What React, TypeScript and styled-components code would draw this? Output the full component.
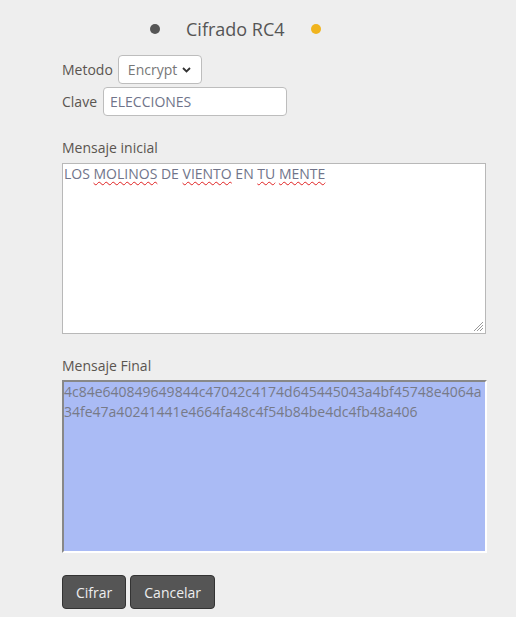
import React from "react";
import styled, { createGlobalStyle } from "styled-components";

const Global = createGlobalStyle`
  html, body { margin: 0; padding: 0; background: #eeeeee; }
  body { font-family: "Open Sans", "Liberation Sans", sans-serif; }
`;

const Page = styled.div`
  width: 516px;
  height: 617px;
  box-sizing: border-box;
  padding: 14px 0 0 62px;
  color: #555;
  font-size: 14px;
`;

const TitleRow = styled.div`
  display: flex;
  align-items: center;
  gap: 26px;
  margin-left: 88px;
  height: 30px;
`;

const Dot = styled.span<{ $color: string }>`
  width: 10px;
  height: 10px;
  border-radius: 50%;
  background: ${(p) => p.$color};
`;

const Title = styled.h1`
  margin: 0;
  font-size: 18px;
  font-weight: 400;
  color: #555;
`;

const FieldRow = styled.div<{ $top: number }>`
  display: flex;
  align-items: center;
  gap: 5px;
  margin-top: ${(p) => p.$top}px;
`;

const Label = styled.label`
  color: #5a5550;
  font-size: 14px;
`;

const SelectBox = styled.div`
  position: relative;
  width: 84px;
  height: 29px;
  box-sizing: border-box;
  border: 1px solid #bdbdbd;
  border-radius: 4px;
  background: #fff;
  display: flex;
  align-items: center;
  padding-left: 9px;
  color: #777;
  font-size: 14px;
`;

const Chevron = styled.svg`
  position: absolute;
  right: 10px;
  top: 11px;
`;

const Input = styled.input`
  width: 184px;
  height: 29px;
  box-sizing: border-box;
  margin-left: 1px;
  border: 1px solid #bdbdbd;
  border-radius: 4px;
  background: #fff;
  padding: 0 6px;
  font-family: inherit;
  font-size: 14px;
  color: #70748a;
  outline: none;
`;

const SectionLabel = styled.div<{ $top: number }>`
  margin-top: ${(p) => p.$top}px;
  height: 22px;
  line-height: 22px;
  color: #5a5550;
`;

const Area = styled.div`
  position: relative;
  margin-top: 4px;
  width: 424px;
  height: 171px;
  box-sizing: border-box;
  border: 1px solid #b8b8b8;
  background: #fff;
  padding: 0 1px;
  font-size: 14px;
  line-height: 20px;
  color: #70748a;
`;

const Squiggle = styled.span`
  text-decoration: underline wavy #e02020;
  text-decoration-thickness: 1px;
  text-underline-offset: 2px;
`;

const Grip = styled.svg`
  position: absolute;
  right: 1px;
  bottom: 1px;
`;

const OutArea = styled.div`
  margin-top: 3px;
  width: 425px;
  height: 173px;
  box-sizing: border-box;
  border-style: solid;
  border-width: 2px;
  border-color: #888 #fff #fff #888;
  background: #aabbf5;
  font-size: 14px;
  line-height: 20px;
  color: #777a88;
  word-break: break-all;
`;

const Buttons = styled.div`
  display: flex;
  gap: 4px;
  margin-top: 22px;
`;

const Button = styled.button`
  height: 34px;
  padding: 0 13px;
  border: 1px solid #333;
  border-radius: 4px;
  background: #555;
  color: #eee;
  font-family: inherit;
  font-size: 14px;
`;

export default function App() {
  return (
    <>
      <Global />
      <Page>
        <TitleRow>
          <Dot $color="#555" />
          <Title>Cifrado RC4</Title>
          <Dot $color="#f0b41e" />
        </TitleRow>
        <FieldRow $top={11}>
          <Label>Metodo</Label>
          <SelectBox>
            Encrypt
            <Chevron width="9" height="6" viewBox="0 0 9 6">
              <path d="M1 1l3.5 3.5L8 1" fill="none" stroke="#333" strokeWidth="1.8" />
            </Chevron>
          </SelectBox>
        </FieldRow>
        <FieldRow $top={3}>
          <Label>Clave</Label>
          <Input defaultValue="ELECCIONES" />
        </FieldRow>
        <SectionLabel $top={21}>Mensaje inicial</SectionLabel>
        <Area>
          LOS <Squiggle>MOLINOS</Squiggle> DE <Squiggle>VIENTO</Squiggle> EN{" "}
          <Squiggle>TU</Squiggle> <Squiggle>MENTE</Squiggle>
          <Grip width="12" height="12" viewBox="0 0 12 12">
            <path d="M11 2L2 11M11 5L5 11M11 8L8 11" stroke="#999" strokeWidth="1" />
          </Grip>
        </Area>
        <SectionLabel $top={21}>Mensaje Final</SectionLabel>
        <OutArea>
          4c84e640849649844c47042c4174d645445043a4bf45748e4064a34fe47a40241441e4664fa48c4f54b84be4dc4fb48a406
        </OutArea>
        <Buttons>
          <Button>Cifrar</Button>
          <Button>Cancelar</Button>
        </Buttons>
      </Page>
    </>
  );
}
